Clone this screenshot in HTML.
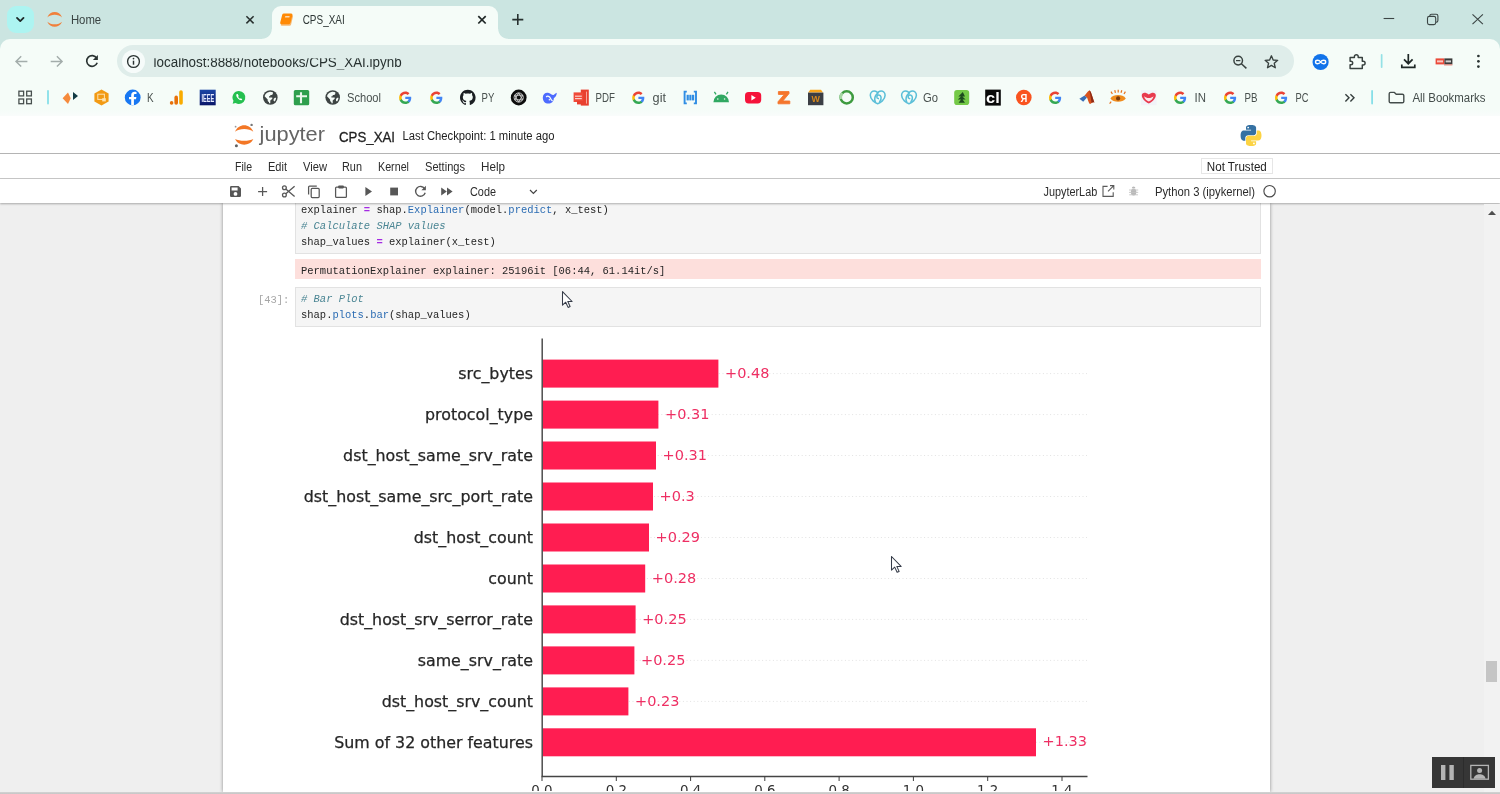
<!DOCTYPE html>
<html lang="en">
<head>
<meta charset="utf-8">
<title>CPS_XAI</title>
<style>
*{box-sizing:border-box;margin:0;padding:0}
html,body{width:1500px;height:794px;overflow:hidden;background:#fff}
body{position:relative;font-family:"Liberation Sans",sans-serif;color:#222}
.abs{position:absolute}
svg{position:absolute;left:0;top:0;overflow:hidden;will-change:transform}
svg text{font-family:"Liberation Sans",sans-serif}
#tabstrip{left:0;top:0;width:1500px;height:52px;background:#cbe5e1}
#tabdrop{left:7px;top:6px;width:27px;height:27px;border-radius:9px;background:#adf4f1}
#activetab{left:272px;top:6px;width:226px;height:34px;background:#f5fcf8;border-radius:9px 9px 0 0}
#activetab:before,#activetab:after{content:"";position:absolute;bottom:1px;width:10px;height:10px;background:radial-gradient(circle at 0 0,rgba(245,252,248,0) 9.3px,#f5fcf8 10.2px)}
#activetab:before{left:-10px}
#activetab:after{right:-10px;transform:scaleX(-1)}
#toolbar{left:0;top:39px;width:1500px;height:44px;background:#f5fcf8;border-radius:10px 10px 0 0}
#urlbar{left:117px;top:45px;width:1177px;height:32px;border-radius:16px;background:#dfedea}
#urlinfo{left:122px;top:50px;width:23px;height:23px;border-radius:12px;background:#f6fbfa}
#bookmarks{left:0;top:83px;width:1500px;height:33px;background:linear-gradient(#f5fcf8 80%,#f9fcfb)}
#jhead{left:0;top:116px;width:1500px;height:38px;background:#fff;border-bottom:1px solid #b4b4b4}
#jmenu{left:0;top:154px;width:1500px;height:25px;background:#fff;border-bottom:1px solid #c9c9c9}
#jtool{left:0;top:179px;width:1500px;height:24px;background:#fff;box-shadow:0 1px 2px rgba(0,0,0,.30)}
#nbarea{left:0;top:203px;width:1500px;height:589px;background:#efefef}
#nbpanel{left:222.500px;top:203px;width:1047.500px;height:589px;background:#fff;box-shadow:0 0 3.500px rgba(0,0,0,.42)}
#vtrack{left:1484px;top:204px;width:16px;height:588px;background:#f2f2f2}
#botline{left:0;top:791.600px;width:1500px;height:3px;background:linear-gradient(#d4d4d4,#bdbdbd)}
.cell{left:295px;width:966px;background:#f5f5f5;border:1px solid #e2e2e2}
.code{will-change:transform;font-family:"Liberation Mono",monospace;font-size:10.48px;line-height:16px;white-space:pre;color:#252525;left:301px}
.c{color:#4a8593;font-style:italic}
.o{color:#a42be2;font-weight:bold}
.f{color:#2b6cb3}
#stderr{left:295px;top:259px;width:966px;height:20px;background:#fddfdc}
#prompt{will-change:transform;left:258px;top:292px;font-family:"Liberation Mono",monospace;font-size:10.45px;line-height:16px;color:#a6a6a6;white-space:pre}
#plot text{font-family:"DejaVu Sans","Liberation Sans",sans-serif}
#nottrusted{left:1201px;top:158px;width:72px;height:16px;border:1px solid #e6e6e6;background:#fff}
#vthumb{left:1486px;top:660.500px;width:11px;height:21.500px;background:#c5c5c5}
#widget{left:1432px;top:757px;width:63px;height:31px;background:#363636}
</style>
</head>
<body>
<div id="tabstrip" class="abs"></div>
<div id="tabdrop" class="abs"></div>
<div id="activetab" class="abs"></div>
<div id="toolbar" class="abs"></div>
<div id="urlbar" class="abs"></div>
<div id="urlinfo" class="abs"></div>
<div id="bookmarks" class="abs"></div>
<svg id="chrome" width="1500" height="116" viewBox="0 0 1500 116">
<path d="M17 17.900 l3.250 3.200 l3.250 -3.200" fill="none" stroke="#1e2928" stroke-width="1.850" stroke-linecap="round" stroke-linejoin="round"/>
<path fill="#f0803c" d="M47.300 17.400 C50 10.300 59.400 10.300 62.100 17.400 C58.600 13.800 50.800 13.800 47.300 17.400 Z"/>
<path fill="#f0803c" d="M47.300 21.800 C50 28.500 59.400 28.500 62.100 21.800 C58.600 25.200 50.800 25.200 47.300 21.800 Z"/>
<text x="70.9" y="24.2" font-size="12" fill="#3a4443" textLength="30.3" lengthAdjust="spacingAndGlyphs">Home</text>
<path d="M246.4 16.2 L253.6 23.400000000000002 M253.6 16.2 L246.4 23.400000000000002" stroke="#28302f" stroke-width="1.5" fill="none"/>
<g id="book"><path d="M284 13.400 H291.200 Q292.800 13.400 292.400 15 L290.500 22.800 Q290.200 24.200 288.800 24.200 H281.400 Q279.800 24.200 280.200 22.600 L282.200 14.800 Q282.600 13.400 284 13.400 Z" fill="#f6b872" transform="translate(0.600,1.600)"/><path d="M284 13.400 H291.200 Q292.800 13.400 292.400 15 L290.500 22.800 Q290.200 24.200 288.800 24.200 H281.400 Q279.800 24.200 280.200 22.600 L282.200 14.800 Q282.600 13.400 284 13.400 Z" fill="#ff8a05"/><path d="M285.300 15.900 H289.700 L289.300 17.600 H284.900 Z" fill="#fbd9b0"/></g>
<text x="302.7" y="24.4" font-size="12" fill="#2f3837" textLength="42" lengthAdjust="spacingAndGlyphs">CPS_XAI</text>
<path d="M478.3 16.1 L485.7 23.5 M485.7 16.1 L478.3 23.5" stroke="#1f2726" stroke-width="1.7" fill="none"/>
<path d="M512.300 19.600 H523.300 M517.800 14.100 V25.100" stroke="#27302f" stroke-width="1.6" fill="none"/>
<path d="M1383.600 18.500 H1394.200" stroke="#3c4645" stroke-width="1.1" fill="none"/>
<rect x="1427.500" y="16.400" width="8.200" height="8.200" rx="1.800" fill="none" stroke="#3c4645" stroke-width="1.100"/><path d="M1429.800 16.200 V15.900 Q1429.800 14.200 1431.500 14.200 H1436.200 Q1437.900 14.200 1437.900 15.900 V20.600 Q1437.900 22.300 1436.200 22.300 H1435.900" fill="none" stroke="#3c4645" stroke-width="1.100"/>
<path d="M1472.500 14.400 L1482.900 24.200 M1482.900 14.400 L1472.500 24.200" stroke="#3c4645" stroke-width="1.150" fill="none"/>
<path d="M27.400000000000002 61.4 H16.400000000000002 M21.200000000000003 56.199999999999996 L16.0 61.4 L21.200000000000003 66.6" stroke="#a3adab" stroke-width="1.450" fill="none" stroke-linejoin="miter"/>
<path d="M50.7 61.4 H61.7 M56.9 56.199999999999996 L62.1 61.4 L56.9 66.6" stroke="#a3adab" stroke-width="1.450" fill="none" stroke-linejoin="miter"/>
<g transform="translate(92,61.2)"><path d="M4.700,-3.100 A5.400,5.400 0 1 0 5.200,1.600" fill="none" stroke="#2a3332" stroke-width="1.650"/><path d="M5.900,-6.300 V-1.300 H0.900 Z" fill="#2a3332"/></g>
<circle cx="133.500" cy="61.500" r="5.900" fill="none" stroke="#2a3332" stroke-width="1.350"/><path d="M133.500 60.700 V64.700" stroke="#2a3332" stroke-width="1.450"/><circle cx="133.500" cy="58.600" r="0.850" fill="#2a3332"/>
<clipPath id="urlclip"><rect x="150" y="58.300" width="260" height="11.100"/></clipPath>
<g clip-path="url(#urlclip)"><text x="153.6" y="66.5" font-size="14" fill="#273130" textLength="248" lengthAdjust="spacingAndGlyphs">localhost:8888/notebooks/CPS_XAI.ipynb</text></g>
<g fill="none" stroke="#38413f" stroke-width="1.450"><circle cx="1238.200" cy="60.600" r="4.300"/><path d="M1241.400 63.800 L1246.400 68.400"/><path d="M1236 60.600 H1240.400" stroke-width="1.250"/></g>
<polygon points="1271.40,55.80 1273.16,59.97 1277.68,60.36 1274.25,63.33 1275.28,67.74 1271.40,65.40 1267.52,67.74 1268.55,63.33 1265.12,60.36 1269.64,59.97" fill="none" stroke="#38413f" stroke-width="1.350" stroke-linejoin="round"/>
<circle cx="1320.600" cy="62" r="8.100" fill="#1273ea"/><path d="M1320.600 62 C1319.200 59.700 1315.500 59.700 1315.500 62 C1315.500 64.300 1319.200 64.300 1320.600 62 C1322 59.700 1325.700 59.700 1325.700 62 C1325.700 64.300 1322 64.300 1320.600 62 Z" fill="none" stroke="#fff" stroke-width="1.350"/>
<path d="M1350.100 57.400 H1354.400 V56.600 A1.900 1.900 0 0 1 1358.200 56.600 V57.400 H1362.300 V61.200 H1363.200 A1.900 1.900 0 0 1 1363.200 65 H1362.300 V68.400 H1350.100 V64.800 H1350.900 A1.800 1.800 0 0 0 1350.900 61.200 H1350.100 Z" fill="none" stroke="#38413f" stroke-width="1.450" stroke-linejoin="round"/>
<rect x="1380.800" y="54" width="1.700" height="14" rx="0.800" fill="#94e1e6"/>
<path d="M1408.300 54 V63.400 M1404 59.400 L1408.300 63.700 L1412.600 59.400 M1401.800 64.400 V67.400 H1414.800 V64.400" fill="none" stroke="#1f2827" stroke-width="1.700" stroke-linejoin="miter"/>
<rect x="1435.600" y="58.400" width="8.800" height="6" fill="#ea4a3a"/><rect x="1444.400" y="58.400" width="8" height="6" fill="#3a3a3a"/><rect x="1437" y="60.400" width="6" height="2" fill="#f9c9c2"/><rect x="1445.600" y="60.400" width="5.400" height="2" fill="#d0d0d0"/><rect x="1444" y="64.400" width="8.400" height="1" fill="#e8786c"/>
<circle cx="1478.400" cy="56" r="1.350" fill="#2a3332"/><circle cx="1478.400" cy="61.300" r="1.350" fill="#2a3332"/><circle cx="1478.400" cy="66.600" r="1.350" fill="#2a3332"/>
<rect x="18.9" y="91.2" width="4.700" height="4.700" fill="none" stroke="#48504f" stroke-width="1.300"/>
<rect x="26.7" y="91.2" width="4.700" height="4.700" fill="none" stroke="#48504f" stroke-width="1.300"/>
<rect x="18.9" y="99.0" width="4.700" height="4.700" fill="none" stroke="#48504f" stroke-width="1.300"/>
<rect x="26.7" y="99.0" width="4.700" height="4.700" fill="none" stroke="#48504f" stroke-width="1.300"/>
<rect x="47.100" y="90" width="1.800" height="14.500" rx="0.900" fill="#86dfe8"/>
<path d="M62.600 98.300 L68 92.600 L70.700 98.300 L68 104 Z" fill="#f58a3c"/><path d="M73 92 L78 96 L73 100 Z" fill="#123a44"/>
<path d="M101.500 89.400 L108.600 93.400 L108.600 101.500 L101.500 105.600 L94.400 101.500 L94.400 93.400 Z" fill="#f29a13"/><rect x="97.800" y="94.200" width="6.600" height="5.200" fill="none" stroke="#fde2b0" stroke-width="1"/><rect x="102.200" y="98.200" width="3.600" height="3.200" fill="#fde2b0"/>
<circle cx="132.700" cy="97.500" r="7.900" fill="#1877f2"/><path d="M133.900 105.400 V99.300 H136 L136.400 96.900 H133.900 V95.400 C133.900 94.600 134.300 94.100 135.300 94.100 H136.500 V92 C136.100 91.900 135.300 91.800 134.500 91.800 C132.400 91.800 131.200 93 131.200 95.200 V96.900 H129 V99.300 H131.200 V105.300 Z" fill="#fff"/>
<text x="147" y="101.7" font-size="12" fill="#49514f" textLength="6.6" lengthAdjust="spacingAndGlyphs">K</text>
<rect x="179.200" y="90.300" width="3.600" height="14.400" rx="1.800" fill="#f9ab00"/><rect x="174.400" y="95.600" width="3.600" height="9.100" rx="1.800" fill="#e8710a"/><circle cx="171.600" cy="102.900" r="1.800" fill="#e8710a"/>
<linearGradient id="ieeeg" x1="0" y1="0" x2="0" y2="1"><stop offset="0" stop-color="#1c46a6"/><stop offset="1" stop-color="#0a1668"/></linearGradient><rect x="199.700" y="89.700" width="16" height="15.600" fill="url(#ieeeg)"/><text x="201.4" y="101.8" font-size="10.5" fill="#e8ecff" textLength="12.8" lengthAdjust="spacingAndGlyphs" font-weight="bold">IEEE</text>
<g transform="translate(239,97.400) scale(0.920) translate(-238.700,-97.400)"><path d="M238.700 90.400 A7 7 0 1 1 235 103.400 L231.800 104.300 L232.700 101.100 A7 7 0 0 1 238.700 90.400 Z" fill="#25c050"/><path d="M236.200 93.800 C235.400 94.500 235.500 96.200 237.100 98.100 C238.800 100.100 240.700 100.900 241.700 100.300 L242.300 99.400 L240.600 98.300 L239.900 98.900 C239.200 98.600 238.200 97.600 237.800 96.700 L238.400 96 L237.300 93.700 Z" fill="#fff"/></g>
<g transform="translate(270.3,97.5)"><circle r="7.3" fill="#3d4443"/><path fill="#f5fcf8" d="M-1.200,-5.600 C-3.500,-5.200 -5.300,-3.400 -5.700,-1.200 L-2.600,1.900 L-2.600,3.100 C-2.600,3.800 -2.000,4.400 -1.300,4.400 L-1.300,5.700 C-0.900,5.800 -0.400,5.800 0,5.800 L0,5.800 L0,3.100 L2.000,1.200 L2.000,0 L-1.300,0 L-1.300,-1.300 L0,-1.300 L0,-2.600 L1.300,-2.600 C2.000,-2.600 2.600,-3.200 2.600,-3.900 L2.600,-5.200 C1.500,-5.700 0.100,-5.900 -1.200,-5.600 Z M3.300,1.900 L3.300,3.300 L4.300,4.000 C5.200,3.000 5.700,1.600 5.800,0.200 L4.600,0.200 C3.900,0.700 3.300,1.200 3.300,1.900 Z"/></g>
<rect x="293.800" y="89.900" width="15.400" height="15.400" rx="1.500" fill="#2e9f4d"/><path d="M301 92.300 V103.300 M296.200 96.200 H307" stroke="#eaf7ec" stroke-width="2.100" fill="none"/>
<g transform="translate(332.7,97.5)"><circle r="7.3" fill="#3d4443"/><path fill="#f5fcf8" d="M-1.200,-5.600 C-3.500,-5.200 -5.300,-3.400 -5.700,-1.200 L-2.600,1.900 L-2.600,3.100 C-2.600,3.800 -2.000,4.400 -1.300,4.400 L-1.300,5.700 C-0.900,5.800 -0.400,5.800 0,5.800 L0,5.800 L0,3.100 L2.000,1.200 L2.000,0 L-1.300,0 L-1.300,-1.300 L0,-1.300 L0,-2.600 L1.300,-2.600 C2.000,-2.600 2.600,-3.200 2.600,-3.900 L2.600,-5.200 C1.500,-5.700 0.100,-5.900 -1.200,-5.600 Z M3.300,1.900 L3.300,3.300 L4.300,4.000 C5.200,3.000 5.700,1.600 5.800,0.200 L4.600,0.200 C3.900,0.700 3.300,1.200 3.300,1.900 Z"/></g>
<text x="347" y="101.7" font-size="12" fill="#49514f" textLength="34" lengthAdjust="spacingAndGlyphs">School</text>
<g transform="translate(399.1,91.6) scale(0.5167)"><path fill="#4285F4" d="M23.5 12.3c0-.8-.1-1.6-.2-2.3H12v4.5h6.5c-.3 1.5-1.1 2.700-2.400 3.600v3h3.900c2.200-2.100 3.500-5.100 3.500-8.800z"/><path fill="#34A853" d="M12 24c3.200 0 6-1.100 7.900-2.900l-3.900-3c-1.100.7-2.400 1.200-4 1.200-3.100 0-5.800-2.100-6.700-4.900H1.300v3.100C3.300 21.300 7.300 24 12 24z"/><path fill="#FBBC05" d="M5.300 14.300c-.2-.7-.4-1.500-.4-2.300s.1-1.600.4-2.300V6.600H1.300C.5 8.200 0 10 0 12s.5 3.800 1.300 5.400l4-3.100z"/><path fill="#EA4335" d="M12 4.800c1.800 0 3.300.6 4.600 1.800l3.400-3.400C17.900 1.200 15.200 0 12 0 7.300 0 3.300 2.700 1.300 6.600l4 3.100c.9-2.800 3.600-4.900 6.700-4.900z"/></g>
<g transform="translate(430.2,91.6) scale(0.5167)"><path fill="#4285F4" d="M23.5 12.3c0-.8-.1-1.6-.2-2.3H12v4.5h6.5c-.3 1.5-1.1 2.700-2.400 3.600v3h3.900c2.200-2.100 3.500-5.100 3.500-8.800z"/><path fill="#34A853" d="M12 24c3.200 0 6-1.100 7.900-2.900l-3.900-3c-1.100.7-2.400 1.200-4 1.200-3.100 0-5.800-2.100-6.700-4.900H1.300v3.100C3.300 21.300 7.300 24 12 24z"/><path fill="#FBBC05" d="M5.300 14.300c-.2-.7-.4-1.500-.4-2.300s.1-1.600.4-2.300V6.600H1.300C.5 8.200 0 10 0 12s.5 3.800 1.300 5.400l4-3.100z"/><path fill="#EA4335" d="M12 4.800c1.800 0 3.300.6 4.600 1.800l3.400-3.400C17.900 1.200 15.200 0 12 0 7.300 0 3.300 2.700 1.300 6.600l4 3.100c.9-2.800 3.600-4.900 6.700-4.900z"/></g>
<g transform="translate(460.0,89.7) scale(0.975)"><path fill="#1b1f23" d="M8 0C3.580 0 0 3.580 0 8c0 3.540 2.290 6.530 5.470 7.590.4.070.55-.17.55-.38 0-.19-.01-.82-.01-1.490-2.010.370-2.530-.490-2.690-.940-.09-.230-.480-.940-.820-1.130-.280-.150-.680-.520-.010-.530.630-.010 1.080.580 1.230.820.720 1.210 1.870.870 2.330.660.070-.520.280-.870.510-1.070-1.780-.2-3.640-.890-3.640-3.950 0-.870.310-1.590.820-2.150-.080-.2-.360-1.020.080-2.120 0 0 .670-.210 2.200.820.640-.180 1.320-.270 2-.270s1.360.090 2 .270c1.530-1.040 2.200-.820 2.200-.820.440 1.100.160 1.920.080 2.120.510.560.820 1.270.820 2.150 0 3.070-1.870 3.750-3.650 3.950.290.250.540.730.540 1.480 0 1.070-.010 1.930-.010 2.200 0 .210.150.460.550.380A8.010 8.010 0 0 0 16 8c0-4.420-3.580-8-8-8z"/></g>
<text x="481.6" y="101.7" font-size="12" fill="#49514f" textLength="12.8" lengthAdjust="spacingAndGlyphs">PY</text>
<circle cx="518.700" cy="97.500" r="7.900" fill="#0d0d0d"/><g fill="none" stroke="#d8d8d8" stroke-width="0.9"><circle cx="518.700" cy="97.500" r="4.600"/><path d="M518.700 92.900 L522.700 99.800 H514.700 Z"/><path d="M518.700 102.100 L514.700 95.200 H522.700 Z"/></g>
<path d="M542.800 97.400 C542.800 93.800 546 92 548.800 93 C550.800 93.700 552.200 95.400 553.400 95 C554.600 94.600 555.400 93.200 556.800 92.800 C556.600 95.600 555.400 97.200 553.800 98.200 C553.800 101.600 551.400 103.600 548.400 103.600 C545 103.600 542.800 101 542.800 97.400 Z" fill="#4d6bfe"/><path d="M546.200 97 C547.600 95.400 549.600 96.400 550.400 98.200 C551 99.600 551.600 100.400 552.600 101" fill="none" stroke="#f5fcf8" stroke-width="1.300"/><circle cx="549.400" cy="99.800" r="0.800" fill="#f5fcf8"/>
<rect x="580.800" y="89.600" width="8" height="16" fill="#e8402f"/><rect x="573.600" y="92.400" width="9.600" height="9.600" fill="#f04a38"/><rect x="577" y="100.800" width="7" height="3.600" fill="#e8402f"/><rect x="575" y="95.600" width="6.800" height="1.200" fill="#fbd0ca"/><rect x="575" y="98" width="6.800" height="1.200" fill="#fbd0ca"/><rect x="586" y="91.600" width="1" height="12" fill="#f7a79d"/>
<text x="595.6" y="101.7" font-size="12" fill="#49514f" textLength="19.4" lengthAdjust="spacingAndGlyphs">PDF</text>
<g transform="translate(632.2,91.6) scale(0.5167)"><path fill="#4285F4" d="M23.5 12.3c0-.8-.1-1.6-.2-2.3H12v4.5h6.5c-.3 1.5-1.1 2.700-2.400 3.600v3h3.900c2.200-2.100 3.500-5.100 3.500-8.800z"/><path fill="#34A853" d="M12 24c3.200 0 6-1.100 7.900-2.900l-3.900-3c-1.100.7-2.400 1.200-4 1.200-3.100 0-5.800-2.100-6.700-4.900H1.300v3.100C3.300 21.300 7.300 24 12 24z"/><path fill="#FBBC05" d="M5.300 14.300c-.2-.7-.4-1.500-.4-2.300s.1-1.600.4-2.300V6.600H1.300C.5 8.200 0 10 0 12s.5 3.800 1.300 5.400l4-3.100z"/><path fill="#EA4335" d="M12 4.800c1.800 0 3.300.6 4.600 1.800l3.400-3.400C17.900 1.200 15.200 0 12 0 7.300 0 3.300 2.700 1.300 6.600l4 3.100c.9-2.800 3.600-4.900 6.700-4.900z"/></g>
<text x="652.6" y="101.7" font-size="12" fill="#49514f" textLength="13.4" lengthAdjust="spacingAndGlyphs">git</text>
<g fill="none" stroke="#2f8de4" stroke-width="1.900"><path d="M686.800 91.600 H684.600 V103.400 H686.800"/><path d="M693.800 91.600 H696 V103.400 H693.800"/></g><rect x="686.600" y="94.800" width="2.200" height="5.600" fill="#2f8de4"/><rect x="689.300" y="94.800" width="2.200" height="5.600" fill="#2f8de4"/><rect x="692" y="94.800" width="2.200" height="5.600" fill="#2f8de4"/>
<path d="M713.400 102.200 A7.800 7.800 0 0 1 729 102.200 Z" fill="#30a862"/><path d="M716 94.400 L714.400 91.800 M726.400 94.400 L728 91.800" stroke="#30a862" stroke-width="1.300" fill="none"/><circle cx="717.800" cy="99" r="0.800" fill="#e8f6ee"/><circle cx="724.600" cy="99" r="0.800" fill="#e8f6ee"/>
<rect x="745" y="92" width="16.200" height="11.400" rx="3.600" fill="#f5133a"/><path d="M751.400 95 L755.800 97.700 L751.400 100.400 Z" fill="#fff"/>
<path d="M778.400 91.600 H789 V93.600 L782.800 101 H789.800 V103.800 H778 V101.800 L784.300 94.400 H778.400 Z" fill="#f5762c" stroke="#f5762c" stroke-width="0.900" stroke-linejoin="round"/>
<path d="M808.200 92.600 L810.200 89.800 H821 L823 92.600 Z" fill="#f9a51a"/><rect x="808" y="92.600" width="15.400" height="12.600" fill="#3b3e44"/><text x="811.6" y="102.2" font-size="8.5" fill="#d4871c" textLength="8.4" lengthAdjust="spacingAndGlyphs" font-weight="bold">W</text>
<circle cx="846.700" cy="97.400" r="6.100" fill="none" stroke="#3d9b3f" stroke-width="2.500"/><path d="M842.300 93.200 A6.100 6.100 0 0 0 841 99" fill="none" stroke="#a7d8a4" stroke-width="2.500"/>
<g transform="translate(877.7,97.3)" fill="none" stroke="#5bbfd8" stroke-width="1.550" stroke-linecap="round"><path d="M0,6.400 C-2.500,5.600 -7.400,2.400 -7.400,-2 C-7.400,-5 -5.200,-6.400 -3.400,-6.400 C-1.600,-6.400 -0.400,-5.400 0,-4.200 C0.400,-5.400 1.600,-6.400 3.400,-6.400 C5.200,-6.400 7.400,-5 7.400,-2 C7.400,2.400 2.500,5.600 0,6.400 Z"/><path d="M0,-4.200 C-2.800,-1.500 -3.800,1.600 -2.300,4.600"/><path d="M1.900,4.800 C4.500,1.600 3.500,-2.700 0.800,-2.300 C-1.300,-2 -1.500,1.100 0.600,1.300"/></g>
<g transform="translate(909,97.3)" fill="none" stroke="#5bbfd8" stroke-width="1.550" stroke-linecap="round"><path d="M0,6.400 C-2.500,5.600 -7.400,2.400 -7.400,-2 C-7.400,-5 -5.200,-6.400 -3.400,-6.400 C-1.600,-6.400 -0.400,-5.400 0,-4.200 C0.400,-5.400 1.600,-6.400 3.400,-6.400 C5.200,-6.400 7.400,-5 7.400,-2 C7.400,2.400 2.500,5.600 0,6.400 Z"/><path d="M0,-4.200 C-2.800,-1.500 -3.800,1.600 -2.300,4.600"/><path d="M1.900,4.800 C4.500,1.600 3.500,-2.700 0.800,-2.300 C-1.300,-2 -1.500,1.100 0.600,1.300"/></g>
<text x="923" y="101.7" font-size="12" fill="#49514f" textLength="15" lengthAdjust="spacingAndGlyphs">Go</text>
<rect x="954.200" y="90" width="15" height="15" rx="2.800" fill="#74c947"/><path d="M962.800 92 L958.400 96.400 H961 L957.800 99.600 H961 L958.600 102.800 H965 L962.600 99.600 H965.600 L962.400 96.400 H965 Z" fill="#1d4a1e"/>
<rect x="985.200" y="89.600" width="15.600" height="16" fill="#0a0a0a"/><text x="986.1" y="103.2" font-size="15.5" fill="#fff" textLength="13.6" lengthAdjust="spacingAndGlyphs" font-weight="bold">cl</text>
<circle cx="1023.800" cy="97.500" r="7.800" fill="#f9531f"/><text x="1020.4" y="101.8" font-size="10.5" fill="#fff" textLength="6.8" lengthAdjust="spacingAndGlyphs" font-weight="bold">Я</text>
<g transform="translate(1049.0,91.6) scale(0.5167)"><path fill="#4285F4" d="M23.5 12.3c0-.8-.1-1.6-.2-2.3H12v4.5h6.5c-.3 1.5-1.1 2.700-2.400 3.600v3h3.900c2.200-2.100 3.500-5.100 3.500-8.800z"/><path fill="#34A853" d="M12 24c3.200 0 6-1.100 7.900-2.900l-3.900-3c-1.100.7-2.400 1.200-4 1.200-3.100 0-5.800-2.100-6.700-4.900H1.300v3.100C3.300 21.300 7.300 24 12 24z"/><path fill="#FBBC05" d="M5.300 14.300c-.2-.7-.4-1.500-.4-2.300s.1-1.600.4-2.300V6.600H1.300C.5 8.200 0 10 0 12s.5 3.800 1.300 5.400l4-3.100z"/><path fill="#EA4335" d="M12 4.800c1.800 0 3.300.6 4.600 1.800l3.400-3.400C17.900 1.200 15.200 0 12 0 7.300 0 3.300 2.700 1.300 6.600l4 3.100c.9-2.800 3.600-4.900 6.700-4.900z"/></g>
<path d="M1079.400 98.800 L1084.600 95.400 L1087 97.600 L1083.200 101.800 Z" fill="#3a6fb7"/><path d="M1084.600 95.400 C1086.600 93.600 1087.600 90.800 1089.400 90.400 C1090.800 90.400 1092.200 96 1094.400 102.600 C1092.600 101.400 1091.400 103.800 1089.800 104 C1088.600 103.200 1087.800 99.200 1087 97.600 Z" fill="#d9531e"/><path d="M1089.400 90.400 C1090.800 90.400 1092.200 96 1094.400 102.600 C1093 101.600 1092.200 102.400 1091.600 103 C1091 98.600 1090.400 94.400 1089.400 90.400 Z" fill="#8c2a16"/>
<path d="M1110.400 98.400 C1113.400 94 1122.600 94 1125.800 98.400 C1122.600 102.800 1113.400 102.800 1110.400 98.400 Z" fill="#f08c1e"/><circle cx="1118.100" cy="98.400" r="2.100" fill="#7a3a0a"/><path d="M1112.400 94 L1111 91.600 M1115.400 92.800 L1114.800 90.200 M1118.200 92.400 V89.800 M1121 92.800 L1121.800 90.200 M1124 94 L1125.400 91.600 M1111.200 101.600 L1109.600 103.600" stroke="#e8711a" stroke-width="1.200" fill="none"/>
<rect x="1141" y="90.200" width="15.600" height="15" fill="#f1f3f8"/><path d="M1148.800 103.600 C1144.400 101.200 1141.800 98 1141.800 95.400 C1141.800 92.600 1145.200 91.600 1148.800 94.600 C1152.400 91.600 1155.800 92.600 1155.800 95.400 C1155.800 98 1153.200 101.200 1148.800 103.600 Z" fill="#e83a4e"/><path d="M1144 96.200 C1146.600 98.600 1151 98.600 1153.600 96.200 C1152.800 99 1150.800 100.800 1148.800 101.600 C1146.800 100.800 1144.800 99 1144 96.200 Z" fill="#fbe6ea"/>
<g transform="translate(1174.0,91.6) scale(0.5167)"><path fill="#4285F4" d="M23.5 12.3c0-.8-.1-1.6-.2-2.3H12v4.5h6.5c-.3 1.5-1.1 2.700-2.400 3.600v3h3.900c2.200-2.100 3.500-5.100 3.500-8.800z"/><path fill="#34A853" d="M12 24c3.200 0 6-1.100 7.900-2.900l-3.900-3c-1.100.7-2.400 1.200-4 1.200-3.100 0-5.800-2.100-6.700-4.900H1.300v3.100C3.300 21.300 7.300 24 12 24z"/><path fill="#FBBC05" d="M5.300 14.300c-.2-.7-.4-1.500-.4-2.300s.1-1.600.4-2.300V6.600H1.300C.5 8.200 0 10 0 12s.5 3.800 1.300 5.400l4-3.100z"/><path fill="#EA4335" d="M12 4.800c1.800 0 3.300.6 4.600 1.800l3.400-3.400C17.900 1.200 15.200 0 12 0 7.300 0 3.300 2.700 1.300 6.600l4 3.100c.9-2.800 3.600-4.900 6.700-4.900z"/></g>
<text x="1194.6" y="101.7" font-size="12" fill="#49514f" textLength="11.4" lengthAdjust="spacingAndGlyphs">IN</text>
<g transform="translate(1224.0,91.6) scale(0.5167)"><path fill="#4285F4" d="M23.5 12.3c0-.8-.1-1.6-.2-2.3H12v4.5h6.5c-.3 1.5-1.1 2.700-2.400 3.600v3h3.900c2.200-2.100 3.500-5.100 3.500-8.800z"/><path fill="#34A853" d="M12 24c3.200 0 6-1.100 7.900-2.900l-3.900-3c-1.100.7-2.400 1.200-4 1.200-3.100 0-5.800-2.100-6.700-4.900H1.300v3.100C3.300 21.300 7.300 24 12 24z"/><path fill="#FBBC05" d="M5.300 14.300c-.2-.7-.4-1.500-.4-2.300s.1-1.600.4-2.300V6.600H1.300C.5 8.200 0 10 0 12s.5 3.800 1.300 5.400l4-3.100z"/><path fill="#EA4335" d="M12 4.800c1.800 0 3.300.6 4.600 1.800l3.400-3.400C17.900 1.200 15.200 0 12 0 7.300 0 3.300 2.700 1.300 6.600l4 3.100c.9-2.800 3.600-4.900 6.700-4.900z"/></g>
<text x="1244.4" y="101.7" font-size="12" fill="#49514f" textLength="13" lengthAdjust="spacingAndGlyphs">PB</text>
<g transform="translate(1275.0,91.6) scale(0.5167)"><path fill="#4285F4" d="M23.5 12.3c0-.8-.1-1.6-.2-2.3H12v4.5h6.5c-.3 1.5-1.1 2.700-2.400 3.600v3h3.900c2.200-2.100 3.500-5.100 3.500-8.800z"/><path fill="#34A853" d="M12 24c3.200 0 6-1.100 7.900-2.900l-3.900-3c-1.100.7-2.400 1.200-4 1.200-3.100 0-5.800-2.100-6.700-4.900H1.300v3.100C3.300 21.300 7.300 24 12 24z"/><path fill="#FBBC05" d="M5.300 14.300c-.2-.7-.4-1.500-.4-2.300s.1-1.600.4-2.300V6.600H1.300C.5 8.200 0 10 0 12s.5 3.800 1.300 5.400l4-3.100z"/><path fill="#EA4335" d="M12 4.800c1.800 0 3.300.6 4.600 1.800l3.400-3.400C17.900 1.200 15.200 0 12 0 7.300 0 3.300 2.700 1.300 6.600l4 3.100c.9-2.800 3.600-4.900 6.700-4.900z"/></g>
<text x="1295.4" y="101.7" font-size="12" fill="#49514f" textLength="13" lengthAdjust="spacingAndGlyphs">PC</text>
<path d="M1345.400 94.200 L1349 97.800 L1345.400 101.400 M1350.400 94.200 L1354 97.800 L1350.400 101.400" fill="none" stroke="#363f3e" stroke-width="1.400"/>
<rect x="1371.200" y="90" width="1.800" height="14.400" rx="0.900" fill="#86dfe8"/>
<path d="M1389.200 93.800 Q1389.200 92.400 1390.600 92.400 H1394.400 L1396.200 94.200 H1402.400 Q1403.800 94.200 1403.800 95.600 V101.400 Q1403.800 102.800 1402.400 102.800 H1390.600 Q1389.200 102.800 1389.200 101.400 Z" fill="none" stroke="#444d4b" stroke-width="1.400" stroke-linejoin="round"/>
<text x="1412.4" y="101.7" font-size="12" fill="#434c4a" textLength="73" lengthAdjust="spacingAndGlyphs">All Bookmarks</text>
</svg>
<div id="nbarea" class="abs"></div>
<div id="nbpanel" class="abs"></div>
<div class="abs cell" style="top:196px;height:58px"></div>
<div class="abs code" style="top:201.5px"><span>explainer </span><span class="o">=</span><span> shap.</span><span class="f">Explainer</span><span>(model.</span><span class="f">predict</span><span>, x_test)</span>
<span class="c"># Calculate SHAP values</span>
<span>shap_values </span><span class="o">=</span><span> explainer(x_test)</span></div>
<div id="stderr" class="abs"></div>
<div class="abs code" style="top:263px">PermutationExplainer explainer: 25196it [06:44, 61.14it/s]</div>
<div class="abs cell" style="top:287px;height:40px"></div>
<div id="prompt" class="abs">[43]:</div>
<div class="abs code" style="top:290.8px"><span class="c"># Bar Plot</span>
<span>shap.</span><span class="f">plots</span><span>.</span><span class="f">bar</span><span>(shap_values)</span></div>
<svg id="plot" style="left:222px;top:330px" width="1048" height="461" viewBox="222 330 1048 461">
<g stroke="#e2e2e2" stroke-width="1" stroke-dasharray="1 2.6">
<line x1="542.5" y1="373.6" x2="1087" y2="373.6"/>
<line x1="542.5" y1="414.6" x2="1087" y2="414.6"/>
<line x1="542.5" y1="455.5" x2="1087" y2="455.5"/>
<line x1="542.5" y1="496.5" x2="1087" y2="496.5"/>
<line x1="542.5" y1="537.5" x2="1087" y2="537.5"/>
<line x1="542.5" y1="578.5" x2="1087" y2="578.5"/>
<line x1="542.5" y1="619.4" x2="1087" y2="619.4"/>
<line x1="542.5" y1="660.4" x2="1087" y2="660.4"/>
<line x1="542.5" y1="701.4" x2="1087" y2="701.4"/>
<line x1="542.5" y1="742.3" x2="1087" y2="742.3"/>
</g>
<g fill="#ff1d51">
<rect x="542.5" y="359.6" width="175.9" height="28"/>
<rect x="542.5" y="400.6" width="115.9" height="28"/>
<rect x="542.5" y="441.5" width="113.5" height="28"/>
<rect x="542.5" y="482.5" width="110.5" height="28"/>
<rect x="542.5" y="523.5" width="106.5" height="28"/>
<rect x="542.5" y="564.5" width="102.7" height="28"/>
<rect x="542.5" y="605.4" width="93.1" height="28"/>
<rect x="542.5" y="646.4" width="91.9" height="28"/>
<rect x="542.5" y="687.4" width="85.9" height="28"/>
<rect x="542.5" y="728.3" width="493.5" height="28"/>
</g>
<g fill="#ee2f63" font-size="14.5">
<text x="725.0" y="377.7">+0.48</text>
<text x="665.0" y="418.7">+0.31</text>
<text x="662.6" y="459.6">+0.31</text>
<text x="659.6" y="500.6">+0.3</text>
<text x="655.6" y="541.6">+0.29</text>
<text x="651.8" y="582.6">+0.28</text>
<text x="642.2" y="623.5">+0.25</text>
<text x="641.0" y="664.5">+0.25</text>
<text x="635.0" y="705.5">+0.23</text>
<text x="1042.6" y="746.4">+1.33</text>
</g>
<g fill="#262626" stroke="#262626" stroke-width="0.25" font-size="15.85" text-anchor="end">
<text x="533.0" y="379.4">src_bytes</text>
<text x="533.0" y="420.4">protocol_type</text>
<text x="533.0" y="461.3">dst_host_same_srv_rate</text>
<text x="533.0" y="502.3">dst_host_same_src_port_rate</text>
<text x="533.0" y="543.3">dst_host_count</text>
<text x="533.0" y="584.2">count</text>
<text x="533.0" y="625.2">dst_host_srv_serror_rate</text>
<text x="533.0" y="666.2">same_srv_rate</text>
<text x="533.0" y="707.2">dst_host_srv_count</text>
<text x="533.0" y="748.1">Sum of 32 other features</text>
</g>
<line x1="542.200" y1="338.500" x2="542.200" y2="776.500" stroke="#484848" stroke-width="1.450"/>
<line x1="541.5" y1="776.5" x2="1087.5" y2="776.5" stroke="#444" stroke-width="1.4"/>
<g fill="#333" font-size="13.4" text-anchor="middle">
<line x1="542.0" y1="776.5" x2="542.0" y2="781" stroke="#3c3c3c" stroke-width="1"/>
<text x="542.0" y="795.2">0.0</text>
<line x1="616.3" y1="776.5" x2="616.3" y2="781" stroke="#3c3c3c" stroke-width="1"/>
<text x="616.3" y="795.2">0.2</text>
<line x1="690.6" y1="776.5" x2="690.6" y2="781" stroke="#3c3c3c" stroke-width="1"/>
<text x="690.6" y="795.2">0.4</text>
<line x1="764.8" y1="776.5" x2="764.8" y2="781" stroke="#3c3c3c" stroke-width="1"/>
<text x="764.8" y="795.2">0.6</text>
<line x1="839.1" y1="776.5" x2="839.1" y2="781" stroke="#3c3c3c" stroke-width="1"/>
<text x="839.1" y="795.2">0.8</text>
<line x1="913.4" y1="776.5" x2="913.4" y2="781" stroke="#3c3c3c" stroke-width="1"/>
<text x="913.4" y="795.2">1.0</text>
<line x1="987.7" y1="776.5" x2="987.7" y2="781" stroke="#3c3c3c" stroke-width="1"/>
<text x="987.7" y="795.2">1.2</text>
<line x1="1062.0" y1="776.5" x2="1062.0" y2="781" stroke="#3c3c3c" stroke-width="1"/>
<text x="1062.0" y="795.2">1.4</text>
</g>
</svg>
<div id="jhead" class="abs"></div>
<div id="jmenu" class="abs"></div>
<div id="jtool" class="abs"></div>
<div id="nottrusted" class="abs"></div>
<svg id="jup" style="top:116px" width="1500" height="90" viewBox="0 116 1500 90">
<g transform="translate(244.200,135.300)"><path fill="#f37726" d="M-9.100,-3.500 C-6,-12.300 6,-12.300 9.100,-3.500 C5,-7.200 -5,-7.200 -9.100,-3.500 Z"/><path fill="#f37726" d="M-9.100,3.700 C-6,11.200 6,11.200 9.100,3.700 C5,6.100 -5,6.100 -9.100,3.700 Z"/><circle cx="7.400" cy="-10.400" r="1.200" fill="#767677"/><circle cx="-8.600" cy="-8.600" r="0.900" fill="#989798"/><circle cx="-7.800" cy="10.400" r="1.500" fill="#616262"/></g>
<text x="259.6" y="141" font-size="20.5" fill="#646464" textLength="65.4" lengthAdjust="spacingAndGlyphs">jupyter</text>
<text x="339" y="142.3" font-size="15.5" fill="#1f1f1f" textLength="56" lengthAdjust="spacingAndGlyphs" stroke="#1f1f1f" stroke-width="0.300">CPS_XAI</text>
<text x="402.5" y="140.3" font-size="12" fill="#222" textLength="152" lengthAdjust="spacingAndGlyphs">Last Checkpoint: 1 minute ago</text>
<g transform="translate(1240.600,125.100) scale(0.1890)"><path fill="#3571a3" d="M54.900 0 C26.800 0 28.600 12.200 28.600 12.200 L28.600 24.800 L55.400 24.800 L55.400 28.600 L18 28.600 C18 28.600 0 26.600 0 54.900 C0 83.200 15.700 82.200 15.700 82.200 L25 82.200 L25 69.100 C25 69.100 24.500 53.400 40.500 53.400 L67.100 53.400 C67.100 53.400 82 53.600 82 38.900 L82 14.600 C82 14.600 84.300 0 54.900 0 Z M40.100 8.500 C42.800 8.500 44.900 10.600 44.900 13.300 C44.900 16 42.800 18.100 40.100 18.100 C37.400 18.100 35.300 16 35.300 13.300 C35.300 10.600 37.400 8.500 40.100 8.500 Z"/><path fill="#fcd343" d="M55.700 110.400 C83.800 110.400 82 98.200 82 98.200 L82 85.600 L55.200 85.600 L55.200 81.800 L92.600 81.800 C92.600 81.800 110.600 83.800 110.600 55.500 C110.600 27.200 94.900 28.200 94.900 28.200 L85.600 28.200 L85.600 41.300 C85.600 41.300 86.100 57 70.100 57 L43.500 57 C43.500 57 28.600 56.800 28.600 71.500 L28.600 95.800 C28.600 95.800 26.300 110.400 55.700 110.400 Z M70.500 101.900 C67.800 101.900 65.700 99.800 65.700 97.100 C65.700 94.400 67.800 92.300 70.500 92.300 C73.200 92.300 75.300 94.400 75.300 97.100 C75.300 99.800 73.200 101.900 70.500 101.900 Z"/></g>
<text x="235" y="171" font-size="12" fill="#2c2c2c" textLength="17" lengthAdjust="spacingAndGlyphs">File</text>
<text x="268" y="171" font-size="12" fill="#2c2c2c" textLength="19" lengthAdjust="spacingAndGlyphs">Edit</text>
<text x="303" y="171" font-size="12" fill="#2c2c2c" textLength="24" lengthAdjust="spacingAndGlyphs">View</text>
<text x="342" y="171" font-size="12" fill="#2c2c2c" textLength="20" lengthAdjust="spacingAndGlyphs">Run</text>
<text x="378" y="171" font-size="12" fill="#2c2c2c" textLength="31" lengthAdjust="spacingAndGlyphs">Kernel</text>
<text x="425" y="171" font-size="12" fill="#2c2c2c" textLength="40" lengthAdjust="spacingAndGlyphs">Settings</text>
<text x="481" y="171" font-size="12" fill="#2c2c2c" textLength="24" lengthAdjust="spacingAndGlyphs">Help</text>
<text x="1206.8" y="170.9" font-size="12" fill="#222" textLength="60" lengthAdjust="spacingAndGlyphs">Not Trusted</text>
<path fill="#575757" d="M231.200 186 H238.600 L241 188.400 V195.800 Q241 197 239.800 197 H231.200 Q230 197 230 195.800 V187.200 Q230 186 231.200 186 Z M231.600 187.600 V190.600 H237.600 V187.600 Z M235.500 192 A1.900 1.900 0 1 0 235.500 195.800 A1.900 1.900 0 1 0 235.500 192 Z" fill-rule="evenodd"/>
<path d="M258.100 191.600 H267.100 M262.600 187.100 V196.100" stroke="#575757" stroke-width="1.250" fill="none"/>
<g fill="none" stroke="#575757" stroke-width="1.300"><circle cx="284.400" cy="187.800" r="1.900"/><circle cx="284.400" cy="195" r="1.900"/><path d="M285.800 189 L294.600 196.600 M285.800 193.800 L294.600 186.200"/></g>
<g fill="none" stroke="#575757" stroke-width="1.250"><rect x="311.200" y="188.400" width="8" height="9.200" rx="1"/><path d="M316.800 186 H309.600 Q308.600 186 308.600 187 V194.600"/></g>
<g fill="none" stroke="#575757" stroke-width="1.250"><rect x="335.600" y="187" width="10.800" height="10.400" rx="1"/></g><rect x="338.200" y="185.400" width="5.600" height="3" rx="0.800" fill="#575757"/>
<path d="M365.400 187 L372 191.500 L365.400 196 Z" fill="#575757"/>
<rect x="390.200" y="187.600" width="7.800" height="7.800" fill="#575757"/>
<g transform="translate(420.400,191.500)"><path d="M4.200,-2.900 A4.900,4.900 0 1 0 4.800,1.300" fill="none" stroke="#575757" stroke-width="1.400"/><path d="M5.500,-5.700 V-1.200 H1 Z" fill="#575757"/></g>
<path d="M441.200 187.600 L446.800 191.500 L441.200 195.400 Z M447 187.600 L452.600 191.500 L447 195.400 Z" fill="#575757"/>
<text x="470" y="195.6" font-size="12" fill="#2c2c2c" textLength="26" lengthAdjust="spacingAndGlyphs">Code</text>
<path d="M530 190 L533.400 193.400 L536.800 190" fill="none" stroke="#444" stroke-width="1.200"/>
<text x="1043.5" y="195.6" font-size="12" fill="#2c2c2c" textLength="53.7" lengthAdjust="spacingAndGlyphs">JupyterLab</text>
<g fill="none" stroke="#5a5a5a" stroke-width="1.100"><path d="M1107.600 186.400 H1103 V196.400 H1113.200 V192.200"/><path d="M1108 191.400 L1113.800 185.600 M1110 185.600 H1113.800 V189.400"/></g>
<g transform="translate(1133.600,191.600)"><ellipse cx="0" cy="0.400" rx="2.700" ry="3.600" fill="#b8b8b8"/><path d="M-1.800,-3.400 A1.800,1.800 0 0 1 1.800,-3.400 Z" fill="#b8b8b8"/><path d="M-4.600,-1.600 H4.600 M-4.600,0.800 H4.600 M-4.400,3.200 H4.400" stroke="#c4c4c4" stroke-width="0.900"/></g>
<text x="1155" y="195.6" font-size="12" fill="#2c2c2c" textLength="100" lengthAdjust="spacingAndGlyphs">Python 3 (ipykernel)</text>
<circle cx="1269.600" cy="191.200" r="5.700" fill="none" stroke="#4a4a4a" stroke-width="1.150"/>
</svg>
<div id="vtrack" class="abs"></div>
<div id="vthumb" class="abs"></div>
<div id="widget" class="abs"></div>
<div id="botline" class="abs"></div>
<svg id="misc" width="1500" height="794" viewBox="0 0 1500 794">
<g transform="translate(562.5,291.6)"><path d="M0,0 V13.600 L3.200,10.600 L5.600,15.800 L7.600,14.900 L5.300,9.900 H9.600 Z" fill="#fff" stroke="#353b48" stroke-width="1.050" stroke-linejoin="round"/></g>
<g transform="translate(891.5,556.5)"><path d="M0,0 V13.600 L3.200,10.600 L5.600,15.800 L7.600,14.900 L5.300,9.900 H9.600 Z" fill="#fff" stroke="#353b48" stroke-width="1.050" stroke-linejoin="round"/></g>
<path d="M1488 215 L1492 210.800 L1496 215 Z" fill="#4f4f4f"/>
<rect x="1441" y="765" width="4.400" height="15" fill="#b4b4b4"/><rect x="1449.400" y="765" width="4.400" height="15" fill="#b4b4b4"/>
<rect x="1463" y="757" width="1" height="31" fill="#2c2c2c"/>
<rect x="1470.800" y="765.400" width="17.600" height="13.800" fill="none" stroke="#b4b4b4" stroke-width="1.300"/><circle cx="1479.600" cy="770.600" r="2.500" fill="#b4b4b4"/><path d="M1473.600 778.800 C1474.400 775 1477 774.200 1479.600 774.200 C1482.200 774.200 1484.800 775 1485.600 778.800 Z" fill="#b4b4b4"/>
</svg>
</body>
</html>
